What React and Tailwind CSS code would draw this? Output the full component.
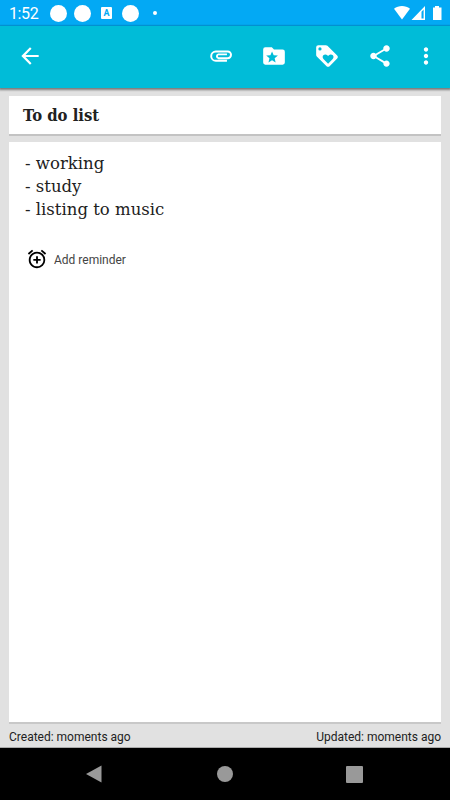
import { MdArrowBack, MdShare, MdMoreVert, MdAddAlarm } from "react-icons/md";

function PaperclipIcon({ className }) {
  return (
    <svg className={className} width="26" height="26" viewBox="0 0 24 24" fill="none" stroke="currentColor" strokeWidth="1.8">
      <path d="M17.500 16.400H7.200A4.250 4.250 0 0 1 7.200 7.900H18.200A3.050 3.050 0 0 1 18.200 14H9.600A1.800 1.800 0 0 1 9.600 10.500H17.500" />
    </svg>
  );
}

function FolderStarIcon({ className }) {
  return (
    <svg className={className} width="26" height="26" viewBox="0 0 24 24" fill="currentColor">
      <path
        fillRule="evenodd"
        d="M4 4H10L12 6H20A2 2 0 0 1 22 8V18A2 2 0 0 1 20 20H4A2 2 0 0 1 2 18V6A2 2 0 0 1 4 4ZM10.200 7.800L8.700 11.300L4.800 11.600L7.800 14.100L6.900 17.900L10.200 15.900L13.500 17.900L12.600 14.100L15.600 11.600L11.700 11.300Z"
      />
    </svg>
  );
}

function TagHeartIcon({ className }) {
  return (
    <svg className={className} width="26" height="26" viewBox="0 0 24 24" fill="currentColor">
      <path
        fillRule="evenodd"
        d="M21.410 11.580L12.410 2.580C12.040 2.210 11.530 2 11 2H4A2 2 0 0 0 2 4V11C2 11.530 2.210 12.040 2.590 12.410L11.590 21.410C11.950 21.780 12.470 22 13 22C13.530 22 14.040 21.790 14.410 21.410L21.410 14.410C21.790 14.040 22 13.530 22 13C22 12.470 21.780 11.950 21.410 11.580ZM5.500 7A1.500 1.500 0 1 1 5.500 4A1.500 1.500 0 0 1 5.500 7ZM17.270 14.770L13 19.040L8.730 14.770C8.280 14.310 8 13.690 8 13A2.500 2.500 0 0 1 10.500 10.500C11.190 10.500 11.820 10.780 12.270 11.240L13 11.960L13.730 11.230C14.180 10.780 14.810 10.500 15.500 10.500A2.500 2.500 0 0 1 18 13C18 13.690 17.720 14.320 17.270 14.770Z"
      />
    </svg>
  );
}

function StatusBar() {
  return (
    <div className="flex h-[26px] shrink-0 items-center bg-[#03a9f4] pl-[9px] pr-[8px] text-white">
      <span className="w-[41px] pt-[2px] text-[16px] leading-[26px] tracking-[-0.4px] whitespace-nowrap">1:52</span>
      <span className="size-[17px] rounded-full bg-white" />
      <span className="ml-[7px] size-[17px] rounded-full bg-white" />
      <span className="ml-[10px] flex h-[12px] w-[11px] items-center justify-center rounded-[1px] bg-white text-[9px] font-bold leading-none text-[#03a9f4]">
        A
      </span>
      <span className="ml-[10px] size-[17px] rounded-full bg-white" />
      <span className="ml-[14px] size-[4px] rounded-full bg-white" />
      <svg className="ml-auto" width="48" height="16" viewBox="0 0 48 16" fill="#fff">
        <path d="M0 3.700C4.500.1 11.500.1 16 3.700L8 14.500Z" />
        <path d="M31 1V15H17.500ZM29.600 4.500L27.500 6.700V13.600H29.600Z" fillRule="evenodd" />
        <path d="M39 2.500H41V1H45V2.500H47.500V15H39Z" />
      </svg>
    </div>
  );
}

function Toolbar() {
  return (
    <header className="z-10 flex h-[62px] shrink-0 items-center bg-[#00bcd8] pb-[2px] pl-[17px] pr-[11px] text-white shadow-[0_1px_2px_1px_rgba(0,0,0,0.45)]">
      <MdArrowBack size={26} />
      <PaperclipIcon className="ml-[165px]" />
      <FolderStarIcon className="ml-[27px]" />
      <TagHeartIcon className="ml-[27px]" />
      <MdShare size={26} className="ml-[27px]" />
      <MdMoreVert size={26} className="ml-auto" />
    </header>
  );
}

function NavBar() {
  return (
    <nav className="flex h-[52px] shrink-0 items-center justify-between bg-black pl-[85px] pr-[87px]">
      <svg width="18" height="18" viewBox="0 0 18 18" fill="#999">
        <path d="M1 9L16.500.5V17.500Z" />
      </svg>
      <span className="ml-px size-[16px] rounded-full bg-[#999]" />
      <span className="size-[17px] rounded-[1px] bg-[#999]" />
    </nav>
  );
}

export default function App() {
  return (
    <div className="flex h-[800px] w-[450px] flex-col overflow-hidden bg-[#e1e1e1] font-[Roboto,sans-serif]">
      <StatusBar />
      <Toolbar />
      <main className="flex flex-1 flex-col px-[9px] pt-[8px]">
        <h1 className="h-[38px] shrink-0 bg-white pl-[14px] pt-px font-['DejaVu_Serif_Condensed','DejaVu_Serif',serif] text-[16.500px] font-bold leading-[38px] text-[#212121] shadow-[0_2px_0_#c3c3c3]">
          <span>To do list</span>
        </h1>
        <section className="mt-[8px] flex-1 bg-white pl-[16px] pt-[10px] shadow-[0_2px_0_#c8c8c8]">
          <div className="font-['DejaVu_Serif',serif] text-[16.500px] leading-[23px] text-[#212121]">
            <p>- working</p>
            <p>- study</p>
            <p>- listing to music</p>
          </div>
          <div className="mt-[27px] flex items-center gap-[6px] pl-[1px] text-[12px] text-[#444]">
            <MdAddAlarm size={22} color="#000" />
            <span className="pt-px">Add reminder</span>
          </div>
        </section>
        <footer className="flex h-[25px] shrink-0 items-center justify-between pt-[5px] text-[12px] text-[#222]">
          <span>Created: moments ago</span>
          <span>Updated: moments ago</span>
        </footer>
      </main>
      <div className="h-px shrink-0 bg-[#aaa]" />
      <NavBar />
    </div>
  );
}
